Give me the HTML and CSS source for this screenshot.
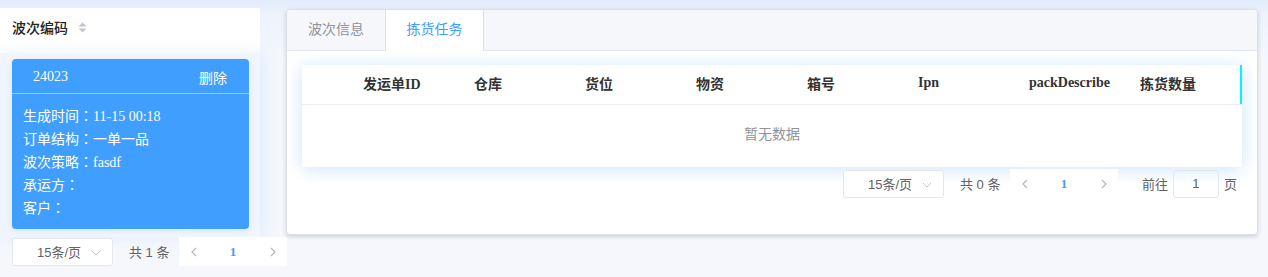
FILE: index.html
```html
<!DOCTYPE html>
<html lang="zh-CN">
<head>
    <meta charset="UTF-8" />
    <meta name="viewport" content="width=device-width, initial-scale=1" />
    <title>波次拣货</title>
    <link rel="stylesheet" href="styles.css">
</head>
<body>
    <div class="page">
        <div class="side">
            <div class="side-head">
                <span>波次编码</span>
                <svg class="sort" width="9" height="11" viewBox="0 0 9 11">
                    <path d="M4.5 0.5 L8.5 4.5 L0.5 4.5 Z" fill="#c0c4cc" />
                    <path d="M4.5 10.5 L8.5 6.5 L0.5 6.5 Z" fill="#c0c4cc" />
                </svg>
            </div>
            <div class="wave-list">
                <div class="wave-card">
                    <div class="wave-top">
                        <span>24023</span>
                        <span class="del">删除</span>
                    </div>
                    <div class="wave-body">
                        <div>生成时间<span class="colon" lang="zh-TW">：</span>11-15 00:18</div>
                        <div>订单结构<span class="colon" lang="zh-TW">：</span>一单一品</div>
                        <div>波次策略<span class="colon" lang="zh-TW">：</span>fasdf</div>
                        <div>承运方<span class="colon" lang="zh-TW">：</span></div>
                        <div>客户<span class="colon" lang="zh-TW">：</span></div>
                    </div>
                </div>
            </div>
            <div class="pager pager-left">
                <div class="size-select">
                    <span>15条/页</span>
                    <svg class="arrow" width="10" height="6" viewBox="0 0 10 6"><path d="M1 1 L5 5 L9 1" fill="none" stroke="#c0c4cc" stroke-width="1" /></svg>
                </div>
                <span class="total">共 1 条</span>
                <div class="pages">
                    <span class="btn prev"><svg width="6" height="10" viewBox="0 0 6 10"><path d="M5 1 L1 5 L5 9" fill="none" stroke="#b4b7bd" stroke-width="1.2" /></svg></span>
                    <span class="num">1</span>
                    <span class="btn next"><svg width="6" height="10" viewBox="0 0 6 10"><path d="M1 1 L5 5 L1 9" fill="none" stroke="#b4b7bd" stroke-width="1.2" /></svg></span>
                </div>
            </div>
        </div>

        <div class="panel">
            <div class="tabs">
                <div class="tab">波次信息</div>
                <div class="tab active">拣货任务</div>
            </div>
            <div class="panel-body">
                <div class="table">
                    <div class="thead">
                        <div></div>
                        <div>发运单ID</div>
                        <div>仓库</div>
                        <div>货位</div>
                        <div>物资</div>
                        <div>箱号</div>
                        <div>Ipn</div>
                        <div>packDescribe</div>
                        <div>拣货数量</div>
                        <div class="gutter"></div>
                    </div>
                    <div class="empty">暂无数据</div>
                </div>
                <div class="pager pager-right">
                    <div class="size-select">
                        <span>15条/页</span>
                        <svg class="arrow" width="10" height="6" viewBox="0 0 10 6"><path d="M1 1 L5 5 L9 1" fill="none" stroke="#c0c4cc" stroke-width="1" /></svg>
                    </div>
                    <span class="total">共 0 条</span>
                    <div class="pages">
                        <span class="btn prev"><svg width="6" height="10" viewBox="0 0 6 10"><path d="M5 1 L1 5 L5 9" fill="none" stroke="#b4b7bd" stroke-width="1.2" /></svg></span>
                        <span class="num">1</span>
                        <span class="btn next"><svg width="6" height="10" viewBox="0 0 6 10"><path d="M1 1 L5 5 L1 9" fill="none" stroke="#b4b7bd" stroke-width="1.2" /></svg></span>
                    </div>
                    <span class="jump">前往</span>
                    <div class="jump-input">1</div>
                    <span class="jump-end">页</span>
                </div>
            </div>
        </div>
    </div>
</body>
</html>
```

FILE: styles.css
```css
body {
    margin: 0;
    background: linear-gradient(to bottom, #e3ecfb 0px, #edf2fc 14px, #f5f7fc 60px);
    font-family: "Liberation Serif", "Noto Sans CJK SC", serif;
    font-size: 14px;
    color: #303133;
    height: 277px;
    overflow: hidden;
}
.page {
    display: flex;
    align-items: flex-start;
    padding-top: 8px;
}
.side {
    width: 260px;
    flex-shrink: 0;
}
.side-head {
    height: 45px;
    box-sizing: border-box;
    padding: 0 0 7px 12px;
    background-color: #ffffff;
    display: flex;
    align-items: center;
    font-weight: 500;
    color: #222222;
}
.sort {
    margin-left: 10px;
}
.wave-list {
    background-color: #f1f5fd;
    box-shadow: 4px 0 14px rgba(64, 158, 255, 0.12);
    padding: 6px 11px 8px 12px;
}
.wave-card {
    background-color: #409eff;
    border-radius: 4px;
    color: #ffffff;
    box-shadow: 0 2px 6px rgba(64, 158, 255, 0.15);
}
.wave-top {
    height: 35px;
    box-sizing: border-box;
    padding: 1px 22px 0 21px;
    display: flex;
    align-items: center;
    justify-content: space-between;
    border-bottom: 1px solid rgba(255, 255, 255, 0.45);
}
.wave-body {
    padding: 10px 11px 10px 11px;
    line-height: 23px;
}
.wave-body div {
    height: 23px;
    white-space: nowrap;
}
.colon {
    font-family: "Noto Sans CJK TC", sans-serif;
}
.pager {
    display: flex;
    align-items: center;
    font-family: "Liberation Sans", "Noto Sans CJK SC", sans-serif;
    font-size: 13px;
    color: #606266;
    white-space: nowrap;
}
.pager > * {
    flex-shrink: 0;
}
.pager-left {
    padding: 0 0 0 12px;
}
.size-select {
    width: 101px;
    height: 28px;
    box-sizing: border-box;
    border: 1px solid #e4e7ed;
    border-radius: 3px;
    background-color: #ffffff;
    display: flex;
    align-items: center;
    position: relative;
}
.size-select span {
    width: 76px;
    text-align: center;
    padding-left: 8px;
}
.size-select .arrow {
    position: absolute;
    right: 11px;
    top: 11px;
}
.total {
    margin-left: 16px;
    width: 40px;
}
.pages {
    display: flex;
    margin-left: 10px;
    background-color: #ffffff;
    height: 29px;
}
.btn, .num {
    width: 36px;
    display: flex;
    align-items: center;
}
.prev {
    padding-left: 12px;
    box-sizing: border-box;
}
.next {
    padding-left: 19px;
    box-sizing: border-box;
}
.num {
    justify-content: center;
    color: #409eff;
    font-weight: bold;
    font-family: "Liberation Serif", serif;
}
.panel {
    margin: 1px 0 0 26px;
    width: 972px;
    height: 226px;
    box-sizing: border-box;
    background-color: #ffffff;
    border: 1px solid #dcdfe6;
    border-radius: 4px;
    box-shadow: 0 2px 4px rgba(0, 0, 0, 0.12), 0 0 6px rgba(0, 0, 0, 0.04);
    overflow: hidden;
}
.tabs {
    display: flex;
    height: 40px;
    background-color: #f5f7fa;
    border-bottom: 1px solid #e4e7ed;
}
.tab {
    width: 98px;
    line-height: 40px;
    text-align: center;
    color: #909399;
    box-sizing: border-box;
}
.tab.active {
    width: 99px;
    color: #409eff;
    background-color: #ffffff;
    border-left: 1px solid #dcdfe6;
    border-right: 1px solid #dcdfe6;
    height: 41px;
}
.panel-body {
    padding: 14px 15px 0 15px;
}
.table {
    width: 940px;
    background-color: #ffffff;
    box-shadow: 0 2px 16px rgba(64, 158, 255, 0.28);
}
.thead {
    display: grid;
    grid-template-columns: 50px repeat(8, 1fr) 2px;
    height: 40px;
    box-sizing: border-box;
    border-bottom: 1px solid #ebeef5;
    font-weight: bold;
    color: #333333;
}
.thead div {
    display: flex;
    align-items: center;
    padding: 0 0 3px 11px;
    white-space: nowrap;
}
.thead .gutter {
    padding: 0;
    background-color: #00f6ff;
}
.empty {
    height: 62px;
    box-sizing: border-box;
    padding-bottom: 6px;
    line-height: 56px;
    text-align: center;
    color: #909399;
    font-family: "Noto Sans CJK SC", sans-serif;
}
.pager-right {
    justify-content: flex-end;
    padding: 2px 0 0 0;
    width: 939px;
}
.jump {
    margin-left: 24px;
}
.jump-input {
    width: 46px;
    height: 28px;
    box-sizing: border-box;
    border: 1px solid #e4e7ed;
    border-radius: 3px;
    margin-left: 5px;
    text-align: center;
    line-height: 26px;
}
.jump-end {
    margin-left: 5px;
    margin-right: 4px;
}
```
